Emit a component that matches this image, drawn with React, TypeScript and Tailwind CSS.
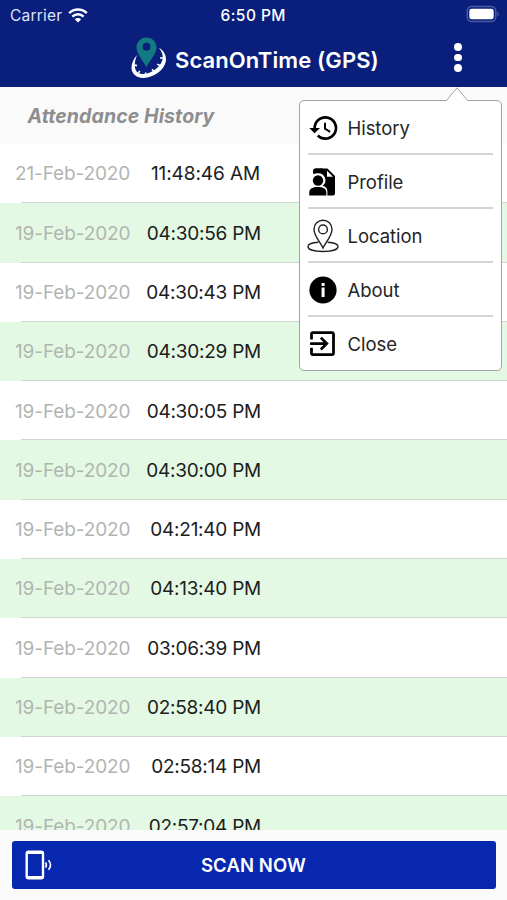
import clsx from "clsx";
import type { ReactNode } from "react";
import { MdExitToApp, MdHistory } from "react-icons/md";

export default function App() {
	return (
		<main className="relative flex h-[900px] w-[507px] flex-col overflow-hidden bg-[#fafafa] font-['Inter',sans-serif]">
			<header className="h-[87px] shrink-0 bg-[#0a1f7c] text-white">
				<StatusBar />

				<div className="flex h-[57px] items-center pl-[131px]">
					<Logo />
					<h1 className="ml-[9px] mt-0.5 w-[206px] whitespace-nowrap text-[22px] font-semibold leading-none tracking-[0.1px]">
						ScanOnTime (GPS)
					</h1>

					<button className="-mt-0.5 ml-[71px] flex w-3 flex-col items-center gap-[3px]">
						<span className="size-[7.5px] rounded-full bg-white" />
						<span className="size-[7.5px] rounded-full bg-white" />
						<span className="size-[7.5px] rounded-full bg-white" />
					</button>
				</div>
			</header>

			<h2 className="h-[57px] shrink-0 pl-[27.5px] pt-[17px] text-[19.5px] font-bold italic leading-6 tracking-[0.1px] text-[#8e8e90]">
				Attendance History
			</h2>

			<ul className="min-h-0 flex-1 overflow-hidden bg-white">
				{records.map((record, index) => (
					<li
						key={record.time}
						className={clsx(
							"h-[59.3px]",
							index % 2 === 1 ? "bg-[#e3f9e3]" : "bg-white",
						)}
					>
						<div className="ml-[21px] flex h-full items-center border-b border-[#cdd6cf] pt-[3px] text-[19px]">
							<span className="-ml-1.5 w-[116px] whitespace-nowrap tracking-[-0.12px] text-[#b1b5b2]">
								{record.date}
							</span>
							<span
								className={clsx(
									"whitespace-nowrap text-right text-[#1b201c]",
									index === 0
										? "w-[129px] tracking-[-0.1px]"
										: "w-[130px] tracking-[-0.25px]",
								)}
							>
								{record.time}
							</span>
						</div>
					</li>
				))}
			</ul>

			<footer className="h-[70px] shrink-0 px-[11.5px] pt-[11px]">
				<button className="flex h-12 w-[484px] items-center rounded-[3px] bg-[#0728ae] pl-3 text-white">
					<ScanIcon />
					<span className="flex-1 pr-[42px] pt-0.5 text-center text-[18.5px] font-semibold tracking-[0.1px]">
						SCAN NOW
					</span>
				</button>
			</footer>

			<Menu />
		</main>
	);
}

function StatusBar() {
	return (
		<div className="flex h-[30px] items-center pl-2.5 text-[15.5px] leading-none">
			<span className="w-[58px] pt-0.5 tracking-[0.2px] text-[#dfe3f5]">
				Carrier
			</span>
			<svg width="20" height="15" viewBox="0 0 20 15" className="shrink-0">
				<path
					d="M1.2 5.2a12.6 12.6 0 0 1 17.6 0M4.4 8.6a8 8 0 0 1 11.2 0"
					fill="none"
					stroke="#fff"
					strokeWidth="2.5"
				/>
				<path d="M10 14.6l-3.2-3.3a4.6 4.6 0 0 1 6.4 0z" fill="#fff" />
			</svg>
			<span className="ml-[132.5px] w-[67.5px] whitespace-nowrap pt-px font-medium tracking-[0.45px]">
				6:50 PM
			</span>
			<svg width="34" height="18" viewBox="0 0 34 18" className="-mt-0.5 ml-[178px]">
				<rect
					x="1.2"
					y="1.5"
					width="28.6"
					height="15"
					rx="4.5"
					fill="none"
					stroke="#4a5a9f"
					strokeWidth="1.4"
				/>
				<rect x="3.3" y="3.7" width="24.4" height="10.6" rx="2.4" fill="#fff" />
				<path d="M31.3 6.7c1.9.8 1.9 3.8 0 4.6z" fill="#4a5a9f" />
			</svg>
		</div>
	);
}

function Logo() {
	return (
		<svg width="35" height="42" viewBox="0 0 35 42" className="-mt-0.5">
			<path
				d="M6 18C-1 26-2 36 7 40C18 44 35 34 35 22C35 17 31 12 28 11C33 17 33 23 28 29C22 36 12 39 6.500 35.500C2.500 32 3.500 24 6 18Z"
				fill="#fff"
			/>
			<path
				d="M3 28l3 .6M7 36l2-2M15 38.500l-.4-3M23 34.500l-2-2.200M29 28.500l-2.800-1.400M32 21h-3"
				stroke="#fff"
				strokeWidth="1.600"
			/>
			<path
				fillRule="evenodd"
				d="M15.500 .5C9.500 .5 5.500 5 5.500 10.700C5.500 17 12.500 24 15.300 30C18.200 24 25.500 17 25.500 10.700C25.500 5 21.500 .5 15.500 .5ZM15.500 5.800a3.900 3.900 0 1 1 0 7.800a3.900 3.900 0 0 1 0-7.800Z"
				fill="#127a83"
			/>
		</svg>
	);
}

function Menu() {
	return (
		<nav className="absolute left-[298.5px] top-[100px] h-[270.5px] w-[203.5px] rounded-[5px] border border-[#a0a3a2] bg-white px-2">
			<svg
				width="24"
				height="15"
				viewBox="0 0 24 15"
				className="absolute -top-[14px] left-[145px]"
			>
				<path d="M1 13.500L12 .5L23 13.500V15H1Z" fill="#fff" />
				<path
					d="M0 13.500H1.500L12 .8L22.500 13.500H24"
					fill="none"
					stroke="#a0a3a2"
				/>
			</svg>

			{menuItems.map((item) => (
				<div
					key={item.label}
					className="flex h-[54px] items-center border-b-2 border-[#d4d4d4] last:border-b-0 last:pb-0.5"
				>
					<span className="-ml-0.5 flex w-[34px] justify-center pt-px text-black">
						{item.icon}
					</span>
					<span className="ml-2 pt-[3px] text-[18.5px] tracking-[-0.05px] text-[#252525]">
						{item.label}
					</span>
				</div>
			))}
		</nav>
	);
}

function ProfileIcon() {
	return (
		<svg width="28" height="28" viewBox="0 0 28 28">
			<path d="M6 .5h12.500l7.500 7.500v17.500a2 2 0 0 1-2 2H4V3a2.500 2.500 0 0 1 2-2.500Z" />
			<path d="M18 2.700v6h6Z" fill="#fff" />
			<path
				d="M0 5.200h8.500a7.100 7.100 0 0 1 5.200 12.600c3 .8 4.700 2.800 4.700 5.700V28H0Z"
				fill="#fff"
			/>
			<path d="M4.500 6.300V3A2.500 2.500 0 0 1 7 .5H14v5.500C11 4 7.500 4.500 4.500 6.300Z" />
			<circle cx="9" cy="12.500" r="5.200" />
			<path d="M.3 27.500v-3.200c0-3.400 3.400-5.200 8.500-5.200s8.500 1.800 8.500 5.200v3.200Z" />
		</svg>
	);
}

function LocationIcon() {
	return (
		<svg
			width="32"
			height="34"
			viewBox="0 0 32 34"
			fill="none"
			stroke="#222"
			strokeWidth="1.400"
		>
			<path d="M16 29C13.500 23.500 7 17 7 10.200a9 9 0 0 1 18 0C25 17 18.500 23.500 16 29Z" />
			<circle cx="16" cy="10.400" r="4.400" />
			<path d="M11.500 23.200C5.500 23.500 1 25 1 27.600C1 30.800 8 32.500 16 32.500S31 30.800 31 27.600C31 25 26.500 23.500 20.500 23.200" />
		</svg>
	);
}

function InfoIcon() {
	return (
		<svg width="28" height="28" viewBox="0 0 28 28">
			<circle cx="14" cy="14" r="13.600" />
			<path d="M12.600 7h3v3h-3ZM12.600 11.500h3v9.500h-3Z" fill="#fff" />
		</svg>
	);
}

function ScanIcon() {
	return (
		<svg
			width="30"
			height="30"
			viewBox="0 0 30 30"
			fill="none"
			stroke="#fff"
			className="shrink-0"
		>
			<rect x="2.700" y="1.700" width="16.300" height="26.600" rx="1.800" strokeWidth="2.400" />
			<path d="M3.500 3.100h14.500M3.500 26.900h14.500" strokeWidth="1.800" />
			<path d="M21.500 12.500q1.800 2.500 0 5M24.500 10.300q4 4.700 0 9.400" strokeWidth="1.600" />
		</svg>
	);
}

const menuItems: { label: string; icon: ReactNode }[] = [
	{ label: "History", icon: <MdHistory size={32} className="ml-0.5" /> },
	{ label: "Profile", icon: <ProfileIcon /> },
	{ label: "Location", icon: <LocationIcon /> },
	{ label: "About", icon: <InfoIcon /> },
	{ label: "Close", icon: <MdExitToApp size={33} /> },
];

const records = [
	{ date: "21-Feb-2020", time: "11:48:46 AM" },
	{ date: "19-Feb-2020", time: "04:30:56 PM" },
	{ date: "19-Feb-2020", time: "04:30:43 PM" },
	{ date: "19-Feb-2020", time: "04:30:29 PM" },
	{ date: "19-Feb-2020", time: "04:30:05 PM" },
	{ date: "19-Feb-2020", time: "04:30:00 PM" },
	{ date: "19-Feb-2020", time: "04:21:40 PM" },
	{ date: "19-Feb-2020", time: "04:13:40 PM" },
	{ date: "19-Feb-2020", time: "03:06:39 PM" },
	{ date: "19-Feb-2020", time: "02:58:40 PM" },
	{ date: "19-Feb-2020", time: "02:58:14 PM" },
	{ date: "19-Feb-2020", time: "02:57:04 PM" },
];
